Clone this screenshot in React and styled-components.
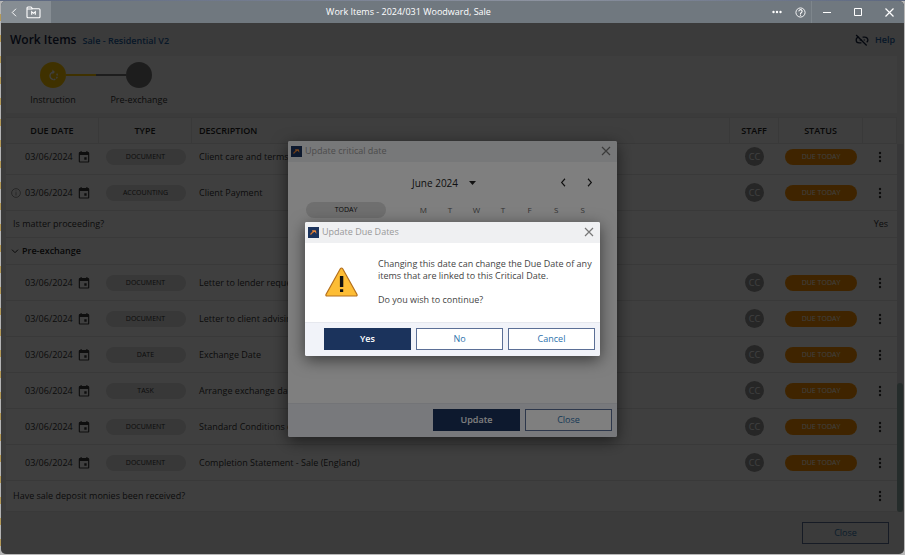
import React from "react";
import styled, { createGlobalStyle, css } from "styled-components";

const Global = createGlobalStyle`
  *, *::before, *::after { box-sizing: border-box; }
  body {
    margin: 0;
    font-family: "Open Sans", "Noto Sans", sans-serif;
    font-size: 9px;
    line-height: 12px;
    color: #333;
    background: #b4b4b4;
  }
  button { font: inherit; color: inherit; margin: 0; padding: 0; border: 0; background: none; cursor: pointer; }
  h1, h2, p { margin: 0; font: inherit; }
  a { text-decoration: none; }
`;

const Desktop = styled.div`
  min-height: 100vh;
  display: flex;
  padding: 1px;
  background: linear-gradient(to right, #5c6780, #8d93a0 60%, #5c6780) top / 100% 1px no-repeat,
    repeating-linear-gradient(to bottom, #b4b4b4 0 14px, #b59a57 14px 21px) left / 1px 100% no-repeat,
    #b8b8b8;
`;

const Window = styled.div`
  flex: 1;
  min-width: 0;
  display: flex;
  flex-direction: column;
  border-radius: 5px;
  overflow: hidden;
  background: #3b3b3b;
`;

const TitleBar = styled.header`
  display: flex;
  align-items: stretch;
  height: 22px;
  background: #70787f;
  color: #fff;
`;

const NavTools = styled.div`
  display: flex;
  align-items: center;
  gap: 6px;
  width: 50px;
  padding-left: 7px;
  background: #868d93;
`;

const WindowTitle = styled.h1`
  flex: 1;
  text-align: center;
  font-size: 9px;
  line-height: 22px;
  font-weight: 400;
`;

const TitleTools = styled.div`
  display: flex;
  align-items: center;
  gap: 9px;
  padding: 0 4px;
  border-right: 1px solid #7e868c;
`;

const WindowControls = styled.div`
  display: flex;
  align-items: center;
  gap: 17px;
  padding: 0 8px;
`;

const IconButton = styled.button`
  display: flex;
  align-items: center;
  justify-content: center;
  min-width: ${(p) => p.$size || 14}px;
  height: ${(p) => p.$size || 14}px;
  color: ${(p) => p.$color || "inherit"};
`;

const Body = styled.main`
  flex: 1;
  position: relative;
  display: flex;
  flex-direction: column;
  padding: 0 1px 0 5px;
  background: #ededed;
`;

const PageHeader = styled.div`
  display: flex;
  align-items: center;
  gap: 6px;
  height: 33px;
  padding: 0 8px 0 4px;
`;

const PageTitle = styled.h2`
  font-size: 12px;
  line-height: 18px;
  font-weight: 600;
  color: #14233f;
`;

const PlanName = styled.span`
  flex: 1;
  font-weight: 600;
  padding-top: 2px;
  color: #2360a0;
`;

const HelpLink = styled.a`
  font-weight: 600;
  color: #2360a0;
`;

const Stepper = styled.ol`
  display: flex;
  list-style: none;
  height: 57px;
  margin: 0 6px 4px 0;
  padding: 6px 0 0 4px;
  background: #f9f9f9;
`;

const Step = styled.li`
  display: flex;
  flex-direction: column;
  align-items: center;
  gap: 6px;
  width: 86px;
`;

const StepTrack = styled.div`
  display: grid;
  grid-template-columns: 1fr 26px 1fr;
  align-items: center;
  width: 100%;
`;

const StepLine = styled.span`
  height: 2px;
  background: ${(p) => p.$color};
`;

const StepDot = styled.span`
  display: flex;
  align-items: center;
  justify-content: center;
  height: 26px;
  border-radius: 50%;
  background: ${(p) => p.$color};
  color: #fff;
`;

const TableArea = styled.div`
  display: flex;
`;

const Table = styled.table`
  flex: 1;
  table-layout: fixed;
  border-collapse: separate;
  border-spacing: 0;
  background: #fff;
`;

const Col = styled.col`
  width: ${(p) => (p.$w ? p.$w + "px" : "auto")};
`;

const HeadCell = styled.th`
  height: 27px;
  padding: 0 0 0 ${(p) => (p.$left ? 7 : 0)}px;
  text-align: ${(p) => (p.$left ? "left" : "center")};
  font-weight: 600;
  color: #222;
  background: #f9f9f9;
  border: solid #e4e4e4;
  border-width: 1px 1px 1px 0;
`;

const Row = styled.tr`
  height: ${(p) => p.$h || 36}px;
`;

const Cell = styled.td`
  padding: 0 0 ${(p) => (p.$lift ? 5 : 0)}px ${(p) => (p.$left ? 7 : 0)}px;
  text-align: ${(p) => (p.$left ? "left" : p.$right ? "right" : "center")};
  border-bottom: 1px solid #e6e6e6;
  white-space: nowrap;
  ${(p) => p.$right && css`padding-right: 9px;`}
  ${(p) => p.$bold && css`font-weight: 600; color: #222;`}
`;

const DateLine = styled.div`
  display: flex;
  align-items: center;
  gap: 4px;
  padding-left: 5px;
  color: #333;
`;

const InfoSlot = styled.span`
  display: flex;
  width: 10px;
  color: #777;
`;

const GroupLabel = styled.div`
  display: flex;
  align-items: center;
  gap: 3px;
  margin-left: -2px;
`;

const Pill = styled.span`
  display: inline-block;
  width: ${(p) => p.$w}px;
  height: 16px;
  border-radius: 8px;
  line-height: 16px;
  text-align: center;
  font-size: 7px;
  vertical-align: middle;
  color: ${(p) => (p.$due ? "#fff" : "#333")};
  background: ${(p) => (p.$due ? "#ff9300" : "#e0e0e0")};
`;

const Avatar = styled.span`
  display: inline-block;
  width: 19px;
  height: 19px;
  border-radius: 50%;
  line-height: 19px;
  font-size: 9px;
  vertical-align: middle;
  color: #fff;
  background: #9b9b9b;
`;

const MenuButton = styled(IconButton)`
  margin: 0 auto;
`;

const ScrollTrack = styled.div`
  display: flex;
  flex-direction: column;
  justify-content: flex-end;
  width: 6px;
  margin-top: 27px;
  background: #dcdfe0;
`;

const ScrollThumb = styled.div`
  height: 35%;
  border-radius: 3px;
  background: #96b0ac;
`;

const PageFooter = styled.footer`
  flex: 1;
  display: flex;
  align-items: center;
  justify-content: flex-end;
  min-height: 42px;
  padding-right: 14px;
`;

const Action = styled.button`
  width: 87px;
  height: 22px;
  line-height: 20px;
  border: 1px solid ${(p) => (p.$primary ? "#1b335c" : "#5b6f96")};
  background: ${(p) => (p.$primary ? "#1b335c" : p.$plain ? "none" : "#fff")};
  color: ${(p) => (p.$primary ? "#fff" : "#2e73ad")};
  font-weight: ${(p) => (p.$primary ? 600 : 400)};
`;

const Overlay = styled.div`
  position: absolute;
  inset: 0;
  display: flex;
  align-items: center;
  justify-content: center;
  background: rgba(0, 0, 0, 0.5);
`;

const Dialog = styled.section`
  display: flex;
  flex-direction: column;
  width: ${(p) => p.$w}px;
  min-height: ${(p) => p.$h}px;
  border-radius: 2px;
  overflow: hidden;
  background: #fff;
  box-shadow: 0 4px 16px rgba(0, 0, 0, 0.55);
`;

const DialogTitle = styled.div`
  display: flex;
  align-items: center;
  gap: 3px;
  height: 21px;
  padding: 0 4px 0 3px;
  background: #eff0f2;
  color: #999;
`;

const DialogName = styled.h2`
  flex: 1;
`;

const DialogFooter = styled.div`
  display: flex;
  align-items: center;
  justify-content: flex-end;
  gap: 5px;
  height: 34px;
  padding-right: 5px;
  background: #f1f3f9;
  border-top: 1px solid #e6e8ee;
`;

const Calendar = styled.div`
  flex: 1;
  display: grid;
  grid-template-columns: 80px 1fr;
  grid-template-rows: 20px 16px;
  gap: 9px 24px;
  padding: 11px 21px 0 18px;
`;

const MonthBar = styled.div`
  grid-column: 2;
  display: flex;
  align-items: center;
  gap: 12px;
  padding-left: 2px;
  color: #222;
`;

const MonthButton = styled.button`
  flex: 1;
  display: flex;
  align-items: center;
  gap: 11px;
  font-size: 10px;
`;

const TodayButton = styled.button`
  height: 16px;
  border-radius: 8px;
  font-size: 7px;
  background: #dedede;
  color: #111;
`;

const Weekdays = styled.div`
  display: grid;
  grid-template-columns: repeat(7, 1fr);
  align-items: center;
  text-align: center;
  font-size: 8px;
  color: #666;
`;

const Message = styled.div`
  flex: 1;
  display: flex;
  align-items: center;
  gap: 20px;
  padding: 0 4px 0 20px;
  color: #444;
`;

const MessageText = styled.div`
  flex: 1;
  display: flex;
  flex-direction: column;
  gap: 12px;
`;

const Stroke = ({ size = 12, d, w = 1.5, children, box = 24 }) => (
  <svg width={size} height={size} viewBox={`0 0 ${box} ${box}`} fill="none" stroke="currentColor" strokeWidth={w} aria-hidden="true">
    {d && <path d={d} />}
    {children}
  </svg>
);

const FolderIcon = () => (
  <svg width="15" height="13" viewBox="0 0 15 13" fill="none" stroke="currentColor" aria-hidden="true">
    <path d="M1 10.500V2q0-1 1-1h3l1.500 1.700H13q1 0 1 1v7q0 1-1 1H2q-1 0-1-1zM1 3h5.500" strokeWidth="1.100" />
    <path d="M5.700 8.700V5.700l1.800 1.600 1.800-1.600v3" strokeWidth="1.100" />
  </svg>
);

const CalendarIcon = () => (
  <svg width="14" height="14" viewBox="0 0 24 24" fill="#3a3a3a" aria-hidden="true">
    <path d="M16.500 12.500h-4v4h4v-4zM16 1.500v2H8v-2H6v2H5c-1.110 0-1.990.9-1.990 2L3 19.500a2 2 0 0 0 2 2h14c1.100 0 2-.9 2-2v-14c0-1.100-.9-2-2-2h-1v-2h-2zm3 18H5v-11h14v11z" />
  </svg>
);

const InfoIcon = () => (
  <Stroke size={10} w={1.8}>
    <circle cx="12" cy="12" r="10.500" />
    <path d="M12 10v8M12 6v2" />
  </Stroke>
);

const RotateIcon = () => (
  <Stroke size={13} w={2.4}>
    <path d="M13 5.500A7 7 0 1 0 12 19.500" />
    <path d="M10 1l4.500 4.500L10 10z" fill="currentColor" stroke="none" />
    <path d="M12 19.500A7 7 0 0 0 17 7.500" strokeDasharray="3.500 2.200" />
  </Stroke>
);

const UnlinkIcon = () => (
  <Stroke size={14} w={2.2}>
    <path d="M2 3.500l18 18M7 7a5 5 0 0 0 0 10h4M13 7h4a5 5 0 0 1 3 9M8 12h4M15 12h1.500" />
  </Stroke>
);

const KebabIcon = () => (
  <svg width="4" height="12" viewBox="0 0 4 12" fill="#333" aria-hidden="true">
    <circle cx="2" cy="2" r="1.200" /><circle cx="2" cy="6" r="1.200" /><circle cx="2" cy="10" r="1.200" />
  </svg>
);

const AppIcon = () => (
  <svg width="11" height="11" viewBox="0 0 11 11" aria-hidden="true">
    <rect width="11" height="11" fill="#1b335c" />
    <path d="M2.500 7.500L5.200 4.600" fill="none" stroke="#d9772e" strokeWidth="1.200" />
    <path d="M4 3.300h3.200q.8 0 .9 1l.3 2.400-1.700-1.900-1.700.6z" fill="#f08c3c" />
  </svg>
);

const WarningIcon = () => (
  <svg width="33" height="30" viewBox="0 0 33 30" role="img" aria-label="Warning">
    <path d="M15.300 1.800q1.200-1.600 2.400 0L32 27.500q.5 1.500-1 1.500H2q-1.500 0-1-1.500z" fill="#fdbd35" stroke="#b5701d" strokeWidth="1.200" />
    <path d="M14.900 9h3.400v11h-3.400zM15 22.300h3.200v2.700H15z" fill="#111" />
  </svg>
);

const CloseButton = () => (
  <IconButton aria-label="Close dialog" $color="#777">
    <Stroke size={10} box={10} w={1.2} d="M1 1l8 8M9 1l-8 8" />
  </IconButton>
);

const items = [
  { type: "DOCUMENT", text: "Client care and terms", h: 31 },
  { type: "ACCOUNTING", text: "Client Payment", info: true },
  { question: "Is matter proceeding?", answer: "Yes", h: 27 },
  { group: "Pre-exchange", h: 27 },
  { type: "DOCUMENT", text: "Letter to lender requesting" },
  { type: "DOCUMENT", text: "Letter to client advising" },
  { type: "DATE", text: "Exchange Date" },
  { type: "TASK", text: "Arrange exchange date" },
  { type: "DOCUMENT", text: "Standard Conditions of Sale" },
  { type: "DOCUMENT", text: "Completion Statement - Sale (England)" },
  { question: "Have sale deposit monies been received?", menu: true, h: 31 },
];

const RowMenu = () => (
  <MenuButton aria-label="Row menu"><KebabIcon /></MenuButton>
);

function WorkItem({ item, first }) {
  if (item.group)
    return (
      <Row $h={item.h}>
        <Cell colSpan={6} $left $bold>
          <GroupLabel><Stroke size={8} w={3} d="M3 8l9 9 9-9" />{item.group}</GroupLabel>
        </Cell>
      </Row>
    );
  if (item.question)
    return (
      <Row $h={item.h}>
        <Cell colSpan={5} $left>{item.question}</Cell>
        <Cell $right={!item.menu}>{item.menu ? <RowMenu /> : item.answer}</Cell>
      </Row>
    );
  return (
    <Row $h={item.h}>
      <Cell $lift={first}>
        <DateLine><InfoSlot>{item.info && <InfoIcon />}</InfoSlot>03/06/2024<CalendarIcon /></DateLine>
      </Cell>
      <Cell $lift={first}><Pill $w={80}>{item.type}</Pill></Cell>
      <Cell $lift={first} $left>{item.text}</Cell>
      <Cell $lift={first}><Avatar>CC</Avatar></Cell>
      <Cell $lift={first}><Pill $w={72} $due>DUE TODAY</Pill></Cell>
      <Cell $lift={first}><RowMenu /></Cell>
    </Row>
  );
}

function CriticalDateDialog() {
  return (
    <Dialog role="dialog" aria-label="Update critical date" $w={329} $h={296}>
      <DialogTitle><AppIcon /><DialogName>Update critical date</DialogName><CloseButton /></DialogTitle>
      <Calendar>
        <MonthBar>
          <MonthButton>
            June 2024
            <svg width="7" height="4" viewBox="0 0 7 4" fill="currentColor" aria-hidden="true"><path d="M0 0h7L3.500 4z" /></svg>
          </MonthButton>
          <IconButton aria-label="Previous month"><Stroke size={9} w={3} d="M16 2L7 12l9 10" /></IconButton>
          <IconButton aria-label="Next month"><Stroke size={9} w={3} d="M8 2l9 10-9 10" /></IconButton>
        </MonthBar>
        <TodayButton>TODAY</TodayButton>
        <Weekdays>{["M", "T", "W", "T", "F", "S", "S"].map((d, i) => <span key={i}>{d}</span>)}</Weekdays>
      </Calendar>
      <DialogFooter><Action $primary>Update</Action><Action>Close</Action></DialogFooter>
    </Dialog>
  );
}

function DueDatesDialog() {
  return (
    <Dialog role="alertdialog" aria-label="Update Due Dates" $w={295} $h={134}>
      <DialogTitle><AppIcon /><DialogName>Update Due Dates</DialogName><CloseButton /></DialogTitle>
      <Message>
        <WarningIcon />
        <MessageText>
          <p>Changing this date can change the Due Date of any items that are linked to this Critical Date.</p>
          <p>Do you wish to continue?</p>
        </MessageText>
      </Message>
      <DialogFooter><Action $primary>Yes</Action><Action>No</Action><Action>Cancel</Action></DialogFooter>
    </Dialog>
  );
}

export default function App() {
  return (
    <Desktop>
      <Global />
      <Window>
        <TitleBar>
          <NavTools>
            <IconButton aria-label="Back" $size={12}><Stroke size={9} w={2.5} d="M16 2L6 12l10 10" /></IconButton>
            <IconButton aria-label="Matter"><FolderIcon /></IconButton>
          </NavTools>
          <WindowTitle>Work Items - 2024/031 Woodward, Sale</WindowTitle>
          <TitleTools>
            <IconButton aria-label="More">
              <svg width="10" height="4" viewBox="0 0 10 4" fill="currentColor" aria-hidden="true">
                <circle cx="1.500" cy="2" r="1.200" /><circle cx="5" cy="2" r="1.200" /><circle cx="8.500" cy="2" r="1.200" />
              </svg>
            </IconButton>
            <IconButton aria-label="Help">
              <Stroke size={11} w={2}>
                <circle cx="12" cy="12" r="10" />
                <path d="M8.500 9.500a3.500 3.500 0 1 1 5 3q-1.500 1-1.500 2.500M12 16.500V19" strokeWidth="2.400" />
              </Stroke>
            </IconButton>
          </TitleTools>
          <WindowControls>
            <IconButton aria-label="Minimise"><Stroke size={8} box={8} w={1} d="M0 4.500h8" /></IconButton>
            <IconButton aria-label="Maximise"><Stroke size={8} box={8} w={1} d="M.5.5h7v7h-7z" /></IconButton>
            <IconButton aria-label="Close window"><Stroke size={9} box={9} w={1.2} d="M.5.5l8 8M8.500.5l-8 8" /></IconButton>
          </WindowControls>
        </TitleBar>
        <Body>
          <PageHeader>
            <PageTitle>Work Items</PageTitle>
            <PlanName>Sale - Residential V2</PlanName>
            <IconButton aria-label="Unlink" $color="#14233f"><UnlinkIcon /></IconButton>
            <HelpLink href="#help">Help</HelpLink>
          </PageHeader>
          <Stepper>
            <Step>
              <StepTrack><span /><StepDot $color="#ffc600"><RotateIcon /></StepDot><StepLine $color="#ffc600" /></StepTrack>
              Instruction
            </Step>
            <Step>
              <StepTrack><StepLine $color="#777" /><StepDot $color="#777" /><span /></StepTrack>
              Pre-exchange
            </Step>
          </Stepper>
          <TableArea>
            <Table>
              <colgroup>
                <Col $w={93} /><Col $w={93} /><Col /><Col $w={49} /><Col $w={84} /><Col $w={34} />
              </colgroup>
              <thead>
                <tr>
                  <HeadCell>DUE DATE</HeadCell>
                  <HeadCell>TYPE</HeadCell>
                  <HeadCell $left>DESCRIPTION</HeadCell>
                  <HeadCell>STAFF</HeadCell>
                  <HeadCell>STATUS</HeadCell>
                  <HeadCell aria-label="Actions" />
                </tr>
              </thead>
              <tbody>{items.map((item, i) => <WorkItem key={i} item={item} first={i === 0} />)}</tbody>
            </Table>
            <ScrollTrack><ScrollThumb /></ScrollTrack>
          </TableArea>
          <PageFooter><Action $plain>Close</Action></PageFooter>
          <Overlay><CriticalDateDialog /></Overlay>
          <Overlay><DueDatesDialog /></Overlay>
        </Body>
      </Window>
    </Desktop>
  );
}
